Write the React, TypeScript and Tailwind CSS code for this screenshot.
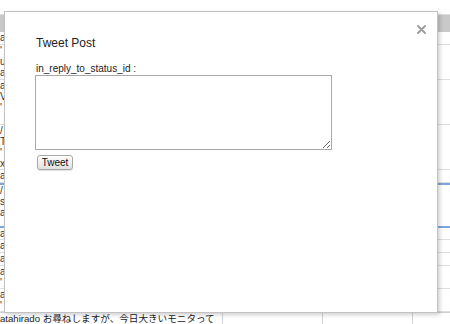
import React from "react";

const ROWS: { h: number; lines: string[]; kind?: "head" | "sel" }[] = [
  { h: 15, lines: [] },
  { h: 17, lines: [], kind: "head" },
  { h: 13, lines: ["at"] },
  { h: 35, lines: ["'", "u", "at"] },
  { h: 45, lines: ["at", "V", "'"] },
  { h: 45, lines: ["/", "T", "'", "x"] },
  { h: 13, lines: ["at"] },
  { h: 45, lines: ["/", "s", "at"], kind: "sel" },
  { h: 12, lines: ["at"] },
  { h: 13, lines: ["at"] },
  { h: 13, lines: ["at"] },
  { h: 23, lines: ["at", "'"] },
  { h: 23, lines: ["at", "'"] },
];

const CELL = "border-l border-[#d4d4d4]";

function Row({ h, lines, kind }: (typeof ROWS)[number]) {
  const bg = kind === "head" ? "bg-[#c9c9c9]" : "bg-white";
  const edge =
    kind === "sel"
      ? "border-y-2 border-[#7ea6dc]"
      : kind === "head"
        ? ""
        : "border-b border-[#dedede]";
  return (
    <div
      className={`grid grid-cols-[222px_100px_90px_1fr] overflow-hidden ${bg} ${edge}`}
      style={{ height: h }}
    >
      <div className="flex flex-col text-[10px] leading-[11px] text-[#333]">
        {lines.map((l, i) => (
          <span key={i}>{l}</span>
        ))}
      </div>
      <div />
      <div />
      <div />
    </div>
  );
}

export default function App() {
  return (
    <div
      className="relative w-[450px] h-[324px] overflow-hidden bg-white"
      style={{ fontFamily: '"Liberation Sans", Arial, "Noto Sans CJK JP", sans-serif' }}
    >
      {/* page behind the dialog */}
      <div className="flex flex-col">
        {ROWS.map((r, i) => (
          <Row key={i} {...r} />
        ))}
        <div className="grid grid-cols-[222px_100px_90px_1fr] h-[12px] border-t border-[#cfcfcf]">
          <div className="text-[9.6px] leading-[11px] text-[#222] whitespace-nowrap">
            atahirado お尋ねしますが、今日大きいモニタって
          </div>
          <div className={CELL} />
          <div className={CELL} />
          <div className={CELL} />
        </div>
      </div>

      {/* dialog */}
      <div className="absolute left-[4px] top-[11px] w-[434px] h-[302px] bg-white border border-[#c2c2c2] shadow-[2px_2px_4px_rgba(0,0,0,0.18)]">
        <button className="absolute right-[11px] top-[13px] w-[9px] h-[9px] text-[#9a9a9a]" aria-label="close">
          <svg viewBox="0 0 9 9" width="9" height="9">
            <path d="M1 1 L8 8 M8 1 L1 8" stroke="currentColor" strokeWidth="1.8" strokeLinecap="round" />
          </svg>
        </button>
        <div className="flex flex-col items-start pt-[24px] pl-[30px]">
          <h2 className="ml-px text-[12px] leading-[14px] text-[#222]">Tweet Post</h2>
          <label className="ml-px mt-[13px] text-[10px] leading-[12px] text-[#222]">
            in_reply_to_status_id :
          </label>
          <textarea className="w-[297px] h-[75px] border border-[#a8a8a8] bg-white outline-none" />
          <button className="mt-[5px] ml-[2px] w-[36px] h-[15px] rounded-[3px] border border-[#a8a8a8] bg-gradient-to-b from-[#ffffff] to-[#e0e0e0] shadow-[0_1px_1px_rgba(0,0,0,0.12)] text-[10px] leading-[13px] text-[#111]">
            Tweet
          </button>
        </div>
      </div>
    </div>
  );
}
